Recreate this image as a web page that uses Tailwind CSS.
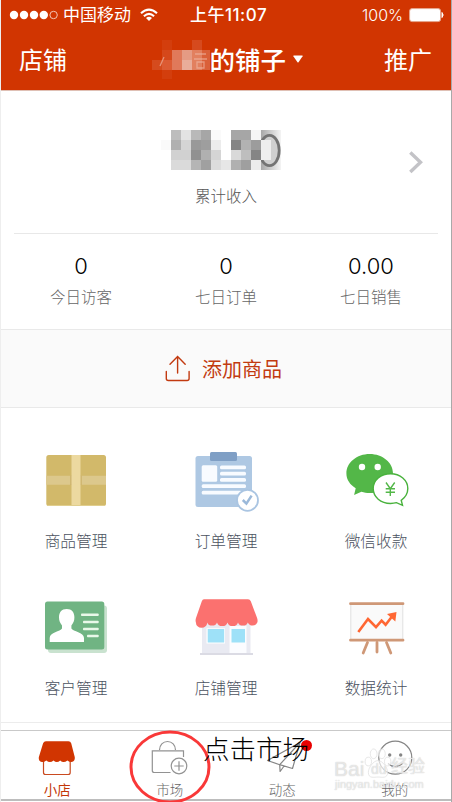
<!DOCTYPE html>
<html lang="zh-CN">
<head>
<meta charset="utf-8">
<meta name="viewport" content="width=device-width, initial-scale=1">
<title>小店</title>
<script src="https://cdn.jsdelivr.net/npm/@tailwindcss/browser@4"></script>
</head>
<body class="bg-white">
<div class="relative flex h-[802px] w-[452px] flex-col overflow-hidden border-l border-r border-l-[#eeeeee] border-r-[#a9a9a9] bg-white font-['Noto_Sans_CJK_SC',sans-serif]">

  <!-- header -->
  <header class="flex h-[91px] shrink-0 flex-col border-b border-[#dfc0b5] bg-[#d13501] text-white">
    <div class="flex h-[30px] items-center font-['Inter','Noto_Sans_CJK_SC',sans-serif] text-[16px] leading-[30px]">
      <svg class="ml-[8px] h-[12px] w-[50px] shrink-0" viewBox="0 0 50 12">
        <g fill="#fff"><circle cx="5" cy="6" r="4.2"/><circle cx="15" cy="6" r="4.2"/><circle cx="25" cy="6" r="4.2"/><circle cx="34.800" cy="6" r="4.200"/></g>
        <circle cx="44.600" cy="6" r="3.700" fill="none" stroke="#f3c5b5" stroke-width="1"/>
      </svg>
      <span class="ml-[4px] w-[68px] whitespace-nowrap text-[17px]">中国移动</span>
      <svg class="ml-[9px] h-[14px] w-[18px] shrink-0" viewBox="0 0 18 14" fill="none" stroke="#fff" stroke-width="2.100">
        <path d="M1 5.200Q9-2 17 5.200M3.900 8.200Q9 3.700 14.100 8.200"/><path d="M9 13L6 10Q9 7.600 12 10Z" fill="#fff" stroke="none"/>
      </svg>
      <span class="ml-[32px] w-[78px] whitespace-nowrap text-[17px] font-medium tracking-[.5px]">上午11:07</span>
      <span class="ml-[94px] w-[43px] whitespace-nowrap text-[16px] font-light">100%</span>
      <svg class="ml-[4px] h-[16px] w-[36px] shrink-0" viewBox="0 0 36 16">
        <rect x=".6" y="1.600" width="31" height="13" rx="2.500" fill="#fff" stroke="#e5a58d"/><path d="M33 5.500q2.300 2.500 0 5z" fill="#fff" stroke="#fff"/>
      </svg>
    </div>
    <div class="flex h-[58px] items-center justify-between pr-[19px] pl-[18px] text-[24px] leading-[58px]">
      <span class="w-[48px]">店铺</span>
      <div class="flex items-center pl-[3px]">
        <svg class="h-[40px] w-[58px]" viewBox="151 39 58 40">
          <path d="M151 60h10v10h-10z" fill="#d54b1e"/><path d="M161 40h10v40h-10z" fill="#d33e0d"/><path d="M161 50h10v10h-10z" fill="#d5481b"/><path d="M161 60h10v10h-10z" fill="#dc5b33"/>
          <path d="M171 50h10v20h-10z" fill="#e0795a"/><path d="M181 50h10v10h-10z" fill="#e59b84"/><path d="M181 60h10v10h-10z" fill="#e9ad9a"/><path d="M191 40h10v10h-10z" fill="#d64a1e"/><path d="M191 50h10v20h-10z" fill="#e2805f"/><path d="M201 50h10v20h-10z" fill="#da6039"/>
          <path d="M163 57l-4 9M194 54h11M193 59h13M196 62h7v6h-7z" fill="none" stroke="#f0b7a4" stroke-width="1.300" opacity=".65"/>
        </svg>
        <span class="w-[76px] whitespace-nowrap text-[25.500px] font-medium">的铺子</span>
        <svg class="ml-[7px] h-[8px] w-[10px]" viewBox="0 0 10 8"><path d="M.8.500h8.400q.800 0 .4.700L5.500 7.200q-.5.600-1 0L.4 1.200Q0 .5.800.5z" fill="#fff"/></svg>
      </div>
      <span class="w-[48px]">推广</span>
    </div>
  </header>

  <!-- income -->
  <section class="relative flex h-[142px] shrink-0 flex-col items-center pt-[37px]">
    <svg class="h-[44px] w-[130px]" viewBox="161 128 130 44" shape-rendering="crispEdges">
      <path d="M161 140h10v10h-10zM211 130h10v10h-10z" fill="#fafafa"/>
      <path d="M171 130h10v10h-10z" fill="#bdbdbd"/><path d="M181 130h10v10h-10z" fill="#e3e3e3"/><path d="M191 130h10v10h-10z" fill="#b9b9b9"/><path d="M201 130h10v10h-10zM231 130h20v10h-20z" fill="#a6a6a6"/><path d="M251 130h10v10h-10z" fill="#f5f5f5"/>
      <path d="M171 140h10v10h-10z" fill="#b0b0b0"/><path d="M181 140h10v10h-10z" fill="#d5d5d5"/><path d="M191 140h10v10h-10z" fill="#999"/><path d="M201 140h10v10h-10z" fill="#9e9e9e"/><path d="M211 140h10v10h-10z" fill="#ececec"/><path d="M231 140h10v10h-10z" fill="#858585"/><path d="M241 140h10v10h-10z" fill="#b2b2b2"/>
      <path d="M171 150h20v10h-20z" fill="#d1d1d1"/><path d="M191 150h10v10h-10z" fill="#919191"/><path d="M201 150h10v10h-10z" fill="#b0b0b0"/><path d="M211 150h10v10h-10z" fill="#d5d5d5"/><path d="M231 150h10v10h-10z" fill="#d9d9d9"/><path d="M241 150h10v10h-10z" fill="#bebebe"/>
      <path d="M171 160h20v10h-20z" fill="#dadada"/><path d="M191 160h10v10h-10z" fill="#b5b5b5"/><path d="M201 160h10v10h-10z" fill="#a0a0a0"/><path d="M211 160h10v10h-10z" fill="#dcdcdc"/><path d="M221 160h10v10h-10z" fill="#e6e6e6"/><path d="M231 160h10v10h-10z" fill="#b0b0b0"/><path d="M241 160h10v10h-10z" fill="#9f9f9f"/>
      <linearGradient id="z"><stop offset="0" stop-color="#a8a8a8"/><stop offset="1" stop-color="#f4f4f4"/></linearGradient>
      <path d="M261 130h20v40h-20z" fill="url(#z)"/>
      <ellipse cx="269.500" cy="150.500" rx="9.700" ry="15.200" fill="#d0d0d0" stroke="#747474" stroke-width="2.800" shape-rendering="auto"/>
      <path d="M261 140h10v20h-10z" fill="#eee"/><path d="M251 140h10v10h-10z" fill="#9c9c9c"/><path d="M251 150h10v10h-10z" fill="#858585"/><path d="M251 160h10v10h-10z" fill="#ececec"/>
    </svg>
    <span class="mt-[11px] text-[15.500px] leading-[24px] font-light text-[#555555]">累计收入</span>
    <svg class="absolute top-[58px] right-[26px] h-[26px] w-[18px]" viewBox="407 149 18 26"><path d="M410.300 152.500l10.200 9.700-10.200 9.700" fill="none" stroke="#c3c3c7" stroke-width="3.400"/></svg>
  </section>

  <!-- stats -->
  <section class="mx-[13px] flex h-[96px] shrink-0 justify-center border-t border-[#e8e8e8]">
    <div class="-mx-2 grid shrink-0 grid-cols-[145px_145px_145px] pt-[16px] text-center">
      <div class="flex flex-col"><b class="font-['Inter',sans-serif] text-[22px] leading-[32px] font-light text-black">0</b><span class="text-[15.500px] leading-[29px] font-light text-[#666666]">今日访客</span></div>
      <div class="flex flex-col"><b class="font-['Inter',sans-serif] text-[22px] leading-[32px] font-light text-black">0</b><span class="text-[15.500px] leading-[29px] font-light text-[#666666]">七日订单</span></div>
      <div class="flex flex-col"><b class="font-['Inter',sans-serif] text-[22px] leading-[32px] font-light text-black">0.00</b><span class="text-[15.500px] leading-[29px] font-light text-[#666666]">七日销售</span></div>
    </div>
  </section>

  <!-- add product -->
  <section class="flex h-[79px] shrink-0 items-center border-y border-[#e9e9e9] bg-[#fafafa] pl-[163px] text-[#c23a10]">
    <svg class="h-[28px] w-[28px]" viewBox="164 355 28 28" fill="none" stroke="currentColor" stroke-width="1.400" stroke-linecap="round" stroke-linejoin="round"><path d="M166.300 371.500v7q0 2 2 2h18.800q2 0 2-2v-7M177.600 373v-16.500M170 364.300l7.600-7.900 7.600 7.900"/></svg>
    <span class="ml-[10px] text-[20px] leading-[30px]">添加商品</span>
  </section>

  <!-- feature grid -->
  <section class="grid h-[315px] shrink-0 grid-cols-3 grid-rows-[147px_147px] border-b border-[#ececec] pt-[37px] text-center text-[15.700px] leading-[24px] font-light text-[#4b5260]">
    <div class="flex flex-col items-center">
      <svg class="h-[76px] w-[70px]" viewBox="41 445 70 76">
        <rect x="46.300" y="455" width="59.700" height="51" rx="2.500" fill="#d2b96a"/><path d="M46.300 475.800h59.700v9H46.300z" fill="#dcc88c"/><path d="M71.500 455h9v51h-9z" fill="#ecd9a0"/><path d="M70.800 475.500v9.500M81.200 475.500v9.500" stroke="#cbb067"/><path d="M47 505.500h58" stroke="#e0ce8e"/>
      </svg>
      <span class="mt-[8px]">商品管理</span>
    </div>
    <div class="flex flex-col items-center">
      <svg class="h-[76px] w-[70px]" viewBox="191 445 70 76">
        <rect x="195.500" y="456" width="56.500" height="51" rx="2.500" fill="#aec8e3"/><rect x="210" y="452" width="27" height="9" rx="1.500" fill="#7f9fc5"/>
        <g fill="#f8fbff"><rect x="201.700" y="465.300" width="15.500" height="16.500" rx="1.500"/><rect x="220" y="465.500" width="26" height="3.800" rx="1.500"/><rect x="220" y="471.700" width="26" height="3.800" rx="1.500"/><rect x="220" y="478" width="26" height="3.800" rx="1.500"/><rect x="201.700" y="484.300" width="44.300" height="3.800" rx="1.500"/><rect x="201.700" y="490.700" width="40" height="3.800" rx="1.500"/></g>
        <circle cx="247.500" cy="500.300" r="10.500" fill="#fff" stroke="#aac5e2" stroke-width="1.800"/><path d="M242.800 500l3.600 3.600 5.200-8" fill="none" stroke="#9bb9da" stroke-width="2.500"/>
      </svg>
      <span class="mt-[8px]">订单管理</span>
    </div>
    <div class="flex flex-col items-center">
      <svg class="h-[76px] w-[70px]" viewBox="341 445 70 76">
        <path d="M369.700 454c12.900 0 23.300 8.600 23.300 19.400s-10.400 19.600-23.300 19.600c-3.200 0-5.400-.4-8.300-1.300l-7.300 3.300 1.600-6.800c-5.700-3.700-9.300-8.600-9.300-14.800 0-10.800 10.400-19.400 23.300-19.400z" fill="#53b748"/>
        <circle cx="362" cy="467" r="3.200" fill="#fff"/><circle cx="377.700" cy="467" r="3.200" fill="#fff"/>
        <path d="M390.500 473.700c9.700 0 17.300 6.600 17.300 14.800 0 5-2.500 9-6.600 11.800l1.300 5-6-2.600c-2 .6-3.700.8-6 .8-9.700 0-17.300-6.400-17.300-14.900s7.600-14.900 17.300-14.900z" fill="#fff" stroke="#49b23d" stroke-width="1.400"/>
        <path d="M386 482.500l4.300 6.200 4.400-6.200M390.300 488.500v7.500M385.700 488.700h9.300M385.700 492.300h9.300" fill="none" stroke="#53b748" stroke-width="1.400"/>
      </svg>
      <span class="mt-[8px]">微信收款</span>
    </div>
    <div class="flex flex-col items-center">
      <svg class="h-[76px] w-[70px]" viewBox="41 592 70 76">
        <rect x="48" y="605.500" width="59" height="47.500" rx="3" fill="#c9e2cf"/><rect x="45" y="601.500" width="59.300" height="48" rx="2.500" fill="#70b483"/>
        <path d="M66.700 609c5.200 0 7.700 3.500 7.700 8.300 0 3.500-1 5.700-3 8.200v3c1.500 3 12.600 3.500 12.600 9.500v4H49.700v-4c0-6 10.800-6.500 12.300-9.500v-3c-2-2.500-3-4.700-3-8.200 0-4.800 2.500-8.300 7.700-8.300z" fill="#fff"/>
        <g fill="#e9f8e9"><rect x="81" y="613.500" width="17.700" height="2.600" rx=".8"/><rect x="83" y="620.700" width="15.700" height="2.600" rx=".8"/><rect x="83" y="627.700" width="15.700" height="2.600" rx=".8"/><rect x="87" y="634.700" width="11.700" height="2.600" rx=".8"/></g>
      </svg>
      <span class="mt-[8px]">客户管理</span>
    </div>
    <div class="flex flex-col items-center">
      <svg class="h-[76px] w-[70px]" viewBox="191 592 70 76">
        <path d="M202 618h48.500v35H202z" fill="#e9eaf2"/><path d="M229.500 626h17v27h-17z" fill="#fbfcff"/><rect x="206.500" y="628.300" width="18.500" height="15.200" fill="#fff"/><rect x="207.700" y="629" width="16.500" height="13.500" fill="#9ee1f8"/><rect x="231.500" y="629" width="13.500" height="13.500" fill="#9ee1f8"/>
        <path d="M200 654h53" stroke="#cfcfdb" stroke-width="1.400"/>
        <path d="M204 599.300h44q2 0 2.800 2l6.200 16.500q1 2.700.3 4.600a5.200 5.200 0 0 1-9.500 0 5.200 4.800 0 0 1-9.800 0 5.400 4.800 0 0 1-10.500 0 5.400 4.800 0 0 1-10.500 0 5.200 4.800 0 0 1-9.800 0 5.400 5.200 0 0 1-11.300 0q-.7-2 .1-4.300l5.800-16.800q.7-2 2.200-2z" fill="#fb716f"/>
      </svg>
      <span class="mt-[8px]">店铺管理</span>
    </div>
    <div class="flex flex-col items-center">
      <svg class="h-[76px] w-[70px]" viewBox="341 592 70 76">
        <path d="M350.800 604h52v36h-52z" fill="#fafafa" stroke="#e0e0e0"/><path d="M350.500 603.700h52.500M350.500 640.200h52.500" stroke="#cf9877" stroke-width="2.800" stroke-linecap="round"/><path d="M367.500 642.500l-4.300 10.500M377 642.500v9.500M386.500 642.500l4.300 10.500" stroke="#cf9877" stroke-width="2.800" stroke-linecap="round"/>
        <path d="M358.300 632l9.700-13 8 8.200 5.600-6.500 4 4 6-7.700" fill="none" stroke="#ff6733" stroke-width="2.600"/><path d="M387 614l9.500-2-1.200 9.500z" fill="#ff6733"/>
      </svg>
      <span class="mt-[8px]">数据统计</span>
    </div>
  </section>

  <!-- tab bar -->
  <nav class="mt-[7px] grid h-[71px] shrink-0 grid-cols-4 border-t border-b-2 border-t-[#c9c9c9] border-b-[#bdbdbd] text-center text-[13.500px] leading-[20px] font-light text-[#666666]">
    <div class="flex flex-col items-center pt-[4px] font-normal text-[#c33708]">
      <svg class="h-[42px] w-[44px]" viewBox="35 735 44 42">
        <path d="M43.500 758v14.500q0 2 2 2h22.700q2 0 2-2V758" fill="#fff" stroke="#c94a20" stroke-width="1.200"/>
        <path d="M46 741.300h22.500q2 0 2.700 2l3.600 14q.4 4-3.300 4.700-2.300 0-4.100-1.500-4 3-7.200 0-3.300 3-6.700 0-3.500 3-7.200 0-2.200 1.700-4.500 1.500-3.500-.7-3-4.700l4.300-14q.8-2 2.900-2z" fill="#d13501"/>
      </svg>
      <span class="mt-[2px]">小店</span>
    </div>
    <div class="flex flex-col items-center pt-[4px]">
      <svg class="h-[42px] w-[44px]" viewBox="148 735 44 42" fill="none" stroke="#929292" stroke-width="1.200">
        <path d="M159.500 750c0-5 3.500-8.500 8-8.500s8 3.500 8 8.500M170.500 772.500H154.300q-2 0-2-2v-19.700h31.200v6.200"/><circle cx="179" cy="766" r="7.800"/><path d="M174.300 766h9.400M179 761.300v9.400"/>
      </svg>
      <span class="mt-[2px]">市场</span>
    </div>
    <div class="flex flex-col items-center pt-[4px]">
      <svg class="h-[42px] w-[44px]" viewBox="260 735 44 42" fill="none" stroke="#858585" stroke-width="1.200" stroke-linejoin="round">
        <path d="M267.500 760.500L300 742.500l-7.500 26-12.800-3.800zM279.700 764.700L300 742.500M279.700 764.700l.4 6.800 4-5.500"/>
      </svg>
      <span class="mt-[2px]">动态</span>
    </div>
    <div class="flex flex-col items-center pt-[4px]">
      <svg class="h-[42px] w-[44px]" viewBox="372 735 44 42" fill="none" stroke="#858585" stroke-width="1.200">
        <circle cx="394.300" cy="757.700" r="16.500"/><circle cx="388.700" cy="755" r="1.700" fill="#858585" stroke="none"/><circle cx="399.700" cy="755" r="1.700" fill="#858585" stroke="none"/><path d="M387 763.500q7.300 6.500 14.500 0"/>
      </svg>
      <span class="mt-[2px]">我的</span>
    </div>
  </nav>

  <!-- notification dot, annotation ring and caption -->
  <span class="absolute top-[740px] left-[300px] size-[11px] rounded-full bg-[#e80000]"></span>
  <svg class="absolute top-[728px] left-[127px] h-[74px] w-[86px]" viewBox="128 728 86 74"><ellipse cx="170" cy="767" rx="39" ry="35" fill="none" stroke="#f93838" stroke-width="3"/></svg>
  <span class="absolute top-[731px] left-[202px] text-[26.500px] leading-[34px] font-light whitespace-nowrap text-black">点击市场</span>

  <!-- watermark -->
  <div class="absolute top-[746px] left-[333px] h-[46px] w-[92px] font-['Liberation_Sans','Noto_Sans_CJK_SC',sans-serif] text-white/60 [text-shadow:0_0_1px_#bbb]">
    <svg class="absolute top-[2px] left-[30px] h-[30px] w-[28px]" viewBox="0 0 28 31" fill="#fff" fill-opacity=".65" stroke="#dcdcdc" stroke-width=".7"><ellipse cx="9.500" cy="6" rx="3.500" ry="5"/><ellipse cx="18" cy="6" rx="3.500" ry="5"/><ellipse cx="4" cy="14" rx="3.300" ry="4.500"/><ellipse cx="24" cy="14" rx="3.300" ry="4.500"/><path d="M14 13c5 0 10 8 10 12 0 7-6 5-10 5S4 32 4 25c0-4 5-12 10-12z"/></svg>
    <span class="absolute top-[12px] left-0 text-[21px] leading-[22px]">Bai</span>
    <span class="absolute top-[15px] left-[37px] text-[14px] leading-[16px]">du</span>
    <span class="absolute top-[10px] left-[57px] text-[17px] leading-[22px] whitespace-nowrap">经验</span>
    <span class="absolute top-[31px] left-[1px] text-[11px] leading-[14px] whitespace-nowrap">jingyan.baidu.com</span>
  </div>
</div>
</body>
</html>
